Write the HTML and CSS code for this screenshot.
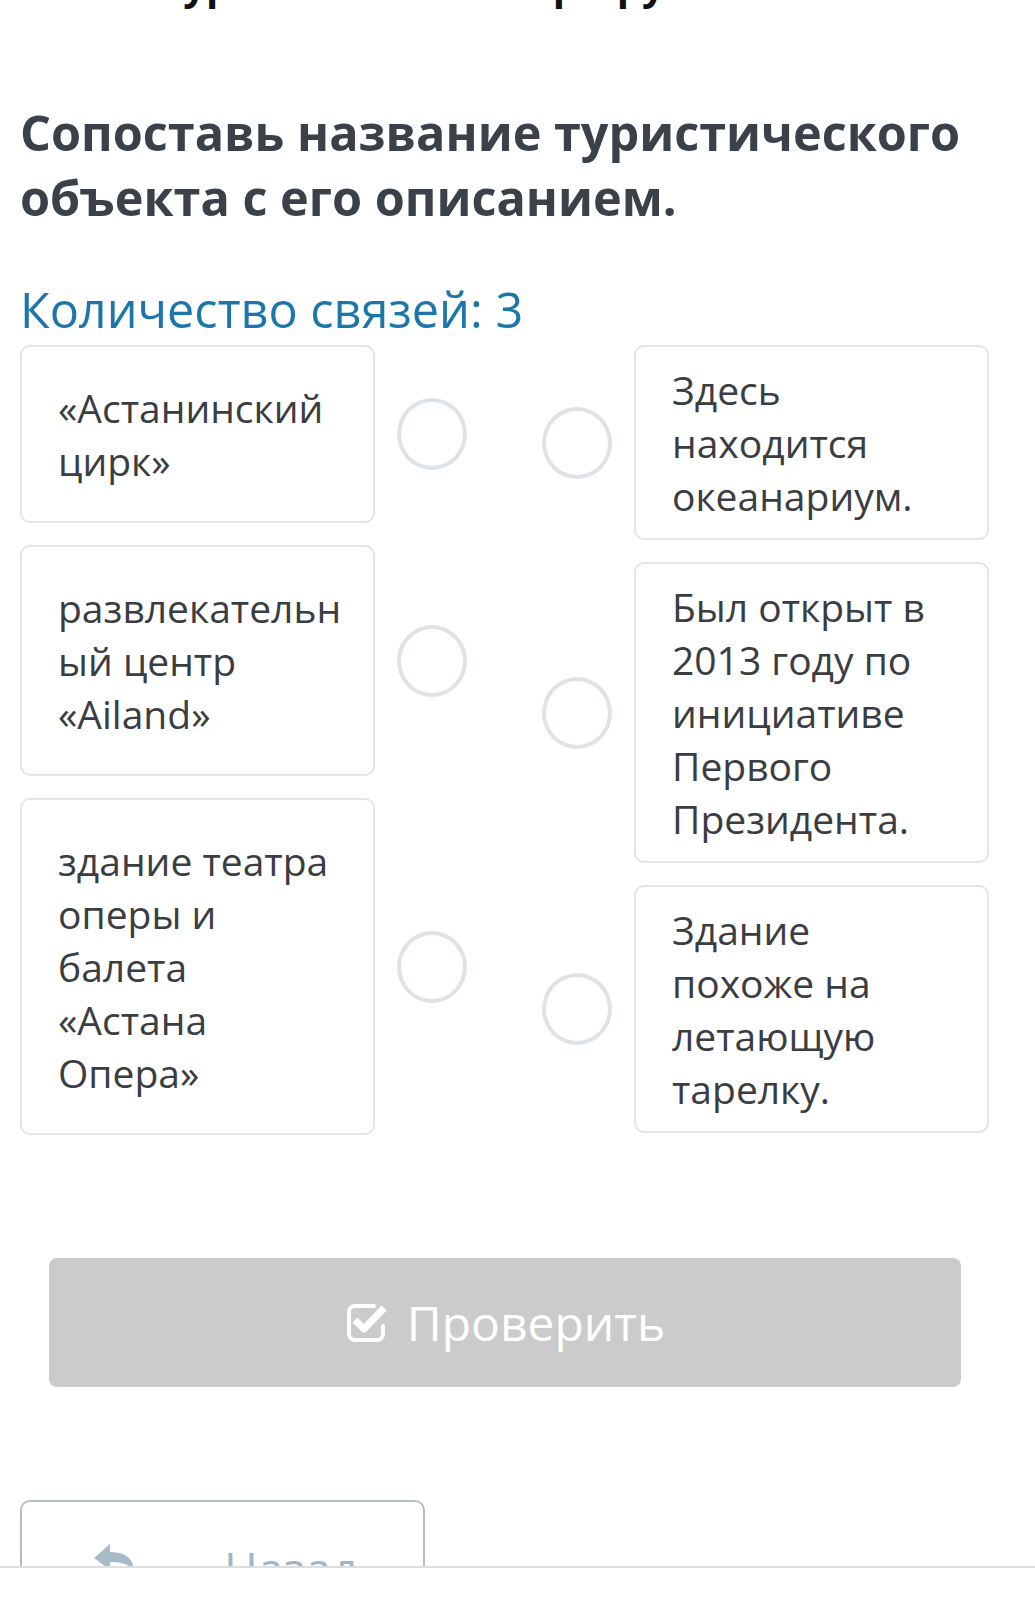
FILE: index.html
```html
<!DOCTYPE html>
<html lang="ru">
<head>
  <meta charset="UTF-8">
  <meta name="viewport" content="width=device-width, initial-scale=1.0">
  <title>Сопоставь название туристического объекта</title>
  <link rel="stylesheet" href="styles.css">
</head>
<body>
  <div class="page">
    <div class="cut-title">Туристический маршрут</div>

    <h1 class="task">Сопоставь название туристического объекта с его описанием.</h1>

    <div class="links-count">Количество связей: 3</div>

    <div class="board">
      <div class="col">
        <div class="item">
          <div class="card card-left">«Астанинский цирк»</div>
          <span class="dot"></span>
        </div>
        <div class="item">
          <div class="card card-left">развлекательный центр «Ailand»</div>
          <span class="dot"></span>
        </div>
        <div class="item">
          <div class="card card-left">здание театра оперы и балета «Астана Опера»</div>
          <span class="dot"></span>
        </div>
      </div>

      <div class="col">
        <div class="item">
          <span class="dot"></span>
          <div class="card card-right">Здесь находится океанариум.</div>
        </div>
        <div class="item">
          <span class="dot"></span>
          <div class="card card-right">Был открыт в 2013 году по инициативе Первого Президента.</div>
        </div>
        <div class="item">
          <span class="dot"></span>
          <div class="card card-right">Здание похоже на летающую тарелку.</div>
        </div>
      </div>
    </div>

    <button class="check-btn" disabled>
      <svg class="check-icon" viewBox="0 0 44 42" width="44" height="42">
        <path d="M29 4H10a6 6 0 0 0-6 6v22a6 6 0 0 0 6 6h22a6 6 0 0 0 6-6v-8" fill="none" stroke="#fff" stroke-width="4" stroke-linecap="round"/>
        <path d="M10 18l9 9L39 6" fill="none" stroke="#fff" stroke-width="7" stroke-linejoin="round"/>
      </svg>
      Проверить
    </button>
  </div>

  <div class="bottom-nav">
    <button class="back-btn">
      <svg class="back-icon" viewBox="0 0 44 40" width="44" height="40">
        <path d="M2 22L18 8v8c12 0 24 4 24 20c-4-8-12-10-24-10v8z" fill="#a7bac7"/>
      </svg>
      <span>Назад</span>
    </button>
  </div>
</body>
</html>
```

FILE: styles.css
```css
body {
  margin: 0;
  font-family: 'Open Sans', 'Noto Sans', sans-serif;
  background: #fff;
  color: #3b3f45;
  overflow: hidden;
}
.page {
  padding: 0 46px 0 20px;
}
.cut-title {
  margin-top: -35px;
  padding-left: 140px;
  font-size: 40px;
  line-height: 40px;
  font-weight: bold;
  color: #111;
}
.task {
  margin: 95px 0 0;
  font-size: 48.6px;
  line-height: 65px;
  font-weight: bold;
  color: #3b4149;
}
.links-count {
  margin: 52px 0 9px;
  font-size: 48.6px;
  line-height: 54px;
  color: #1d76ab;
}
.board {
  display: flex;
  justify-content: space-between;
}
.col {
  display: flex;
  flex-direction: column;
  gap: 22px;
  width: 447px;
}
.item {
  display: flex;
  align-items: center;
  gap: 22px;
}
.card {
  box-sizing: border-box;
  width: 355px;
  flex: none;
  border: 2px solid #e3e5e8;
  border-radius: 10px;
  font-size: 39px;
  line-height: 53px;
  color: #3a3d42;
  overflow-wrap: break-word;
}
.card-left {
  padding: 34px 30px 34px 36px;
}
.card-right {
  padding: 16px 30px 16px 36px;
}
.dot {
  box-sizing: border-box;
  flex: none;
  width: 70px;
  height: 72px;
  border: 4px solid #dfe2e6;
  border-radius: 50%;
}
.check-btn {
  display: flex;
  align-items: center;
  justify-content: center;
  gap: 18px;
  width: 912px;
  height: 129px;
  margin: 123px 0 0 29px;
  border: none;
  border-radius: 8px;
  background: #cbcbcb;
  color: #fff;
  font-family: inherit;
  font-size: 48px;
}
.bottom-nav {
  height: 66px;
  margin-top: 113px;
  padding-left: 20px;
  overflow: hidden;
  border-bottom: 2px solid #dedede;
}
.back-btn {
  display: flex;
  align-items: flex-start;
  width: 405px;
  height: 120px;
  padding: 38px 0 0 70px;
  border: 2px solid #b6bec5;
  border-radius: 10px;
  background: #fff;
  color: #a3b5c2;
  font-family: inherit;
  font-size: 46px;
  line-height: 56px;
}
.back-icon {
  margin-top: -4px;
}
.back-btn span {
  margin-left: 88px;
}
```
